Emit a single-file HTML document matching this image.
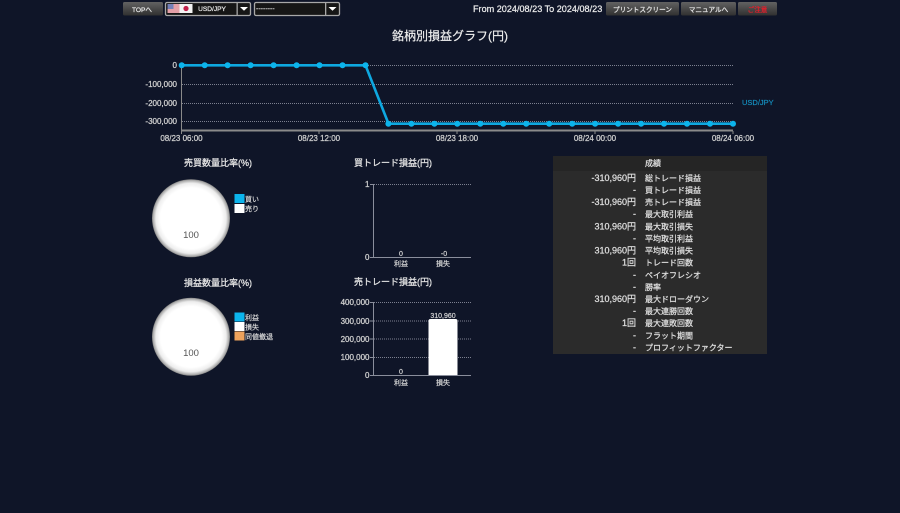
<!DOCTYPE html>
<html lang="ja"><head><meta charset="utf-8"><title>銘柄別損益グラフ</title>
<style>
html,body{margin:0;padding:0;background:#0f1528;width:900px;height:513px;overflow:hidden}
svg{position:absolute;left:0;top:0}
text{font-family:"Liberation Sans","Noto Sans CJK JP",sans-serif;fill:#d8d8d8;stroke:#d8d8d8;stroke-width:.18px}
.b{font-size:6.600px;fill:#e4e4e4;stroke:#e4e4e4;stroke-width:.25px;text-anchor:middle}
.a{font-size:8px;fill:#cfcfcf;stroke:#cfcfcf;stroke-width:.25px}
.e{text-anchor:end}.m{text-anchor:middle}
.t{font-size:9px;fill:#e6e6e6;stroke:#e6e6e6;stroke-width:.25px;text-anchor:middle}
.r{font-size:8px;fill:#e0e0e0;stroke:#e0e0e0;stroke-width:.22px}
.n{font-size:9px}
.l{font-size:7px}
</style></head><body>
<svg width="900" height="513" viewBox="0 0 900 513" xmlns="http://www.w3.org/2000/svg">
<defs>
<linearGradient id="btn" x1="0" y1="0" x2="0" y2="1"><stop offset="0" stop-color="#626262"/><stop offset="1" stop-color="#303030"/></linearGradient>
<radialGradient id="pie"><stop offset="0" stop-color="#fff"/><stop offset=".78" stop-color="#fff"/><stop offset=".9" stop-color="#ededed"/><stop offset=".98" stop-color="#a4a4a4"/><stop offset="1" stop-color="#777"/></radialGradient>
</defs>
<!-- top bar -->
<rect x="123" y="2" width="40" height="13.500" rx="1.500" fill="url(#btn)"/>
<text class="b" x="142" y="12">TOPへ</text>
<rect x="165.500" y="2.500" width="85" height="13" rx="1.500" fill="#161616" stroke="#a8a8a8" stroke-width="1.300"/>
<rect x="167.500" y="4" width="12" height="9" fill="#e4a0a8"/><rect x="167.500" y="4" width="6" height="5" fill="#7480b8"/>
<rect x="179.500" y="4" width="13" height="9" fill="#f4f4f4"/><circle cx="186" cy="8.500" r="2.600" fill="#c0204a"/>
<text class="b" x="212" y="11">USD/JPY</text>
<rect x="236.500" y="3" width="1.300" height="12" fill="#a8a8a8"/>
<path d="M240 7h8l-4 3.800z" fill="#fff"/>
<rect x="254.500" y="2.500" width="85" height="13" rx="1.500" fill="#161616" stroke="#a8a8a8" stroke-width="1.300"/>
<text x="256" y="11" class="l">--------</text>
<rect x="325" y="3" width="1.300" height="12" fill="#a8a8a8"/>
<path d="M328.500 7h8l-4 3.800z" fill="#fff"/>
<text x="473" y="12" style="font-size:9.100px;fill:#eee;stroke:#eee;stroke-width:.22px">From 2024/08/23 To 2024/08/23</text>
<rect x="606" y="2" width="73" height="13.500" rx="1.500" fill="url(#btn)"/>
<text class="b" x="642.500" y="12">プリントスクリーン</text>
<rect x="681" y="2" width="55" height="13.500" rx="1.500" fill="url(#btn)"/>
<text class="b" x="708.500" y="12">マニュアルへ</text>
<rect x="738" y="2" width="39" height="13.500" rx="1.500" fill="url(#btn)"/>
<text class="b" x="757.500" y="12" style="fill:#e0202c;stroke:#e0202c">ご注意</text>
<!-- main title -->
<text x="450" y="40" class="m" style="font-size:12px;fill:#eee;stroke:#eee;stroke-width:.2px">銘柄別損益グラフ(円)</text>
<!-- main chart -->
<g stroke="#7c8090" stroke-width="1" stroke-dasharray="1 1">
<path d="M182 65.500H733M182 84.500H733M182 103.500H733M182 121.500H733"/>
</g>
<path d="M181.500 65V131" stroke="#8a8a8a" stroke-width="1"/>
<path d="M181 130.500H733" stroke="#8a8a8a" stroke-width="2"/>
<path d="M319 131v3M457 131v3M595 131v3M733 131v3M181.500 131v3" stroke="#8a8a8a"/>
<text class="a e" x="177" y="68">0</text>
<text class="a e" x="177" y="87">-100,000</text>
<text class="a e" x="177" y="106">-200,000</text>
<text class="a e" x="177" y="124">-300,000</text>
<text class="a m" x="181.500" y="141">08/23 06:00</text>
<text class="a m" x="319" y="141">08/23 12:00</text>
<text class="a m" x="457" y="141">08/23 18:00</text>
<text class="a m" x="595" y="141">08/24 00:00</text>
<text class="a m" x="733" y="141">08/24 06:00</text>
<text x="742" y="105" style="font-size:7.500px;fill:#1593c4;stroke:#1593c4;stroke-width:.15px">USD/JPY</text>
<path d="M181.700 65.300H365.500L388.500 123.700H733" fill="none" stroke="#0ea8e0" stroke-width="2.600"/>
<g fill="#0cb4ec">
<circle cx="181.700" cy="65.300" r="3"/><circle cx="204.700" cy="65.300" r="3"/><circle cx="227.600" cy="65.300" r="3"/><circle cx="250.600" cy="65.300" r="3"/><circle cx="273.600" cy="65.300" r="3"/><circle cx="296.600" cy="65.300" r="3"/><circle cx="319.500" cy="65.300" r="3"/><circle cx="342.500" cy="65.300" r="3"/><circle cx="365.500" cy="65.300" r="3"/>
<circle cx="388.400" cy="123.700" r="3"/><circle cx="411.400" cy="123.700" r="3"/><circle cx="434.400" cy="123.700" r="3"/><circle cx="457.300" cy="123.700" r="3"/><circle cx="480.300" cy="123.700" r="3"/><circle cx="503.300" cy="123.700" r="3"/><circle cx="526.200" cy="123.700" r="3"/><circle cx="549.200" cy="123.700" r="3"/><circle cx="572.200" cy="123.700" r="3"/><circle cx="595.100" cy="123.700" r="3"/><circle cx="618.100" cy="123.700" r="3"/><circle cx="641.100" cy="123.700" r="3"/><circle cx="664" cy="123.700" r="3"/><circle cx="687" cy="123.700" r="3"/><circle cx="710" cy="123.700" r="3"/><circle cx="733" cy="123.700" r="3"/>
</g>
<!-- pie 1 -->
<text class="t" x="218" y="166">売買数量比率(%)</text>
<circle cx="191" cy="218.300" r="39" fill="url(#pie)"/>
<text x="191" y="238" class="m" style="font-size:9.500px;fill:#555;stroke:none">100</text>
<rect x="234.500" y="194" width="10" height="9" fill="#0cb4ec"/>
<rect x="234.500" y="204" width="10" height="9" fill="#fff"/>
<text x="245" y="201.500" class="l">買い</text>
<text x="245" y="211" class="l">売り</text>
<!-- pie 2 -->
<text class="t" x="218" y="286">損益数量比率(%)</text>
<circle cx="191" cy="336.700" r="39" fill="url(#pie)"/>
<text x="191" y="356" class="m" style="font-size:9.500px;fill:#555;stroke:none">100</text>
<rect x="234.500" y="312.500" width="10" height="9" fill="#0cb4ec"/>
<rect x="234.500" y="322" width="10" height="9" fill="#fff"/>
<rect x="234.500" y="331.500" width="10" height="9" fill="#eda25c"/>
<text x="245" y="320" class="l">利益</text>
<text x="245" y="329.500" class="l">損失</text>
<text x="245" y="339" class="l">同値撤退</text>
<!-- bar 1 -->
<text class="t" x="393" y="166">買トレード損益(円)</text>
<path d="M374 184.500H471" stroke="#7c8090" stroke-dasharray="1 1"/>
<path d="M373.500 184V258" stroke="#8a8e9c"/>
<path d="M370 184.500h4M370 257.500H471" stroke="#8a8e9c"/>
<text class="a e" x="369.500" y="187">1</text>
<text class="a e" x="369.500" y="260">0</text>
<text class="m l" x="401" y="256">0</text>
<text class="m l" x="444" y="256">-0</text>
<text class="m l" x="401" y="266">利益</text>
<text class="m l" x="443" y="266">損失</text>
<!-- bar 2 -->
<text class="t" x="393" y="285">売トレード損益(円)</text>
<path d="M374 302.500H471M374 321H471M374 339H471M374 357.500H471" stroke="#7c8090" stroke-dasharray="1 1"/>
<path d="M373.500 302V376" stroke="#8a8e9c"/>
<path d="M370 302.500h4M370 321h4M370 339h4M370 357.500h4M370 375.500H471" stroke="#8a8e9c"/>
<text class="a e" x="369.500" y="305">400,000</text>
<text class="a e" x="369.500" y="324">300,000</text>
<text class="a e" x="369.500" y="342">200,000</text>
<text class="a e" x="369.500" y="360">100,000</text>
<text class="a e" x="369.500" y="378">0</text>
<path d="M428.500 375V321a2 2 0 0 1 2-2h25a2 2 0 0 1 2 2V375z" fill="#fff"/>
<text class="m l" x="401" y="374">0</text>
<text class="m l" x="443" y="318">310,960</text>
<text class="m l" x="401" y="385">利益</text>
<text class="m l" x="443" y="385">損失</text>
<!-- table -->
<rect x="553" y="156" width="214" height="198" fill="#2b2b2b"/>
<rect x="553" y="156" width="214" height="15" fill="#252525"/>
<text class="r m" x="653" y="166">成績</text>
<text class="r e n" x="636" y="181">-310,960円</text><text class="r" x="645" y="181">総トレード損益</text>
<text class="r e n" x="636" y="193">-</text><text class="r" x="645" y="193">買トレード損益</text>
<text class="r e n" x="636" y="205">-310,960円</text><text class="r" x="645" y="205">売トレード損益</text>
<text class="r e n" x="636" y="217">-</text><text class="r" x="645" y="217">最大取引利益</text>
<text class="r e n" x="636" y="229.500">310,960円</text><text class="r" x="645" y="229.500">最大取引損失</text>
<text class="r e n" x="636" y="241.500">-</text><text class="r" x="645" y="241.500">平均取引利益</text>
<text class="r e n" x="636" y="253.500">310,960円</text><text class="r" x="645" y="253.500">平均取引損失</text>
<text class="r e n" x="636" y="265.500">1回</text><text class="r" x="645" y="265.500">トレード回数</text>
<text class="r e n" x="636" y="278">-</text><text class="r" x="645" y="278">ペイオフレシオ</text>
<text class="r e n" x="636" y="290">-</text><text class="r" x="645" y="290">勝率</text>
<text class="r e n" x="636" y="302">310,960円</text><text class="r" x="645" y="302">最大ドローダウン</text>
<text class="r e n" x="636" y="314">-</text><text class="r" x="645" y="314">最大連勝回数</text>
<text class="r e n" x="636" y="326">1回</text><text class="r" x="645" y="326">最大連敗回数</text>
<text class="r e n" x="636" y="338.500">-</text><text class="r" x="645" y="338.500">フラット期間</text>
<text class="r e n" x="636" y="350.500">-</text><text class="r" x="645" y="350.500">プロフィットファクター</text>
</svg>
</body></html>
